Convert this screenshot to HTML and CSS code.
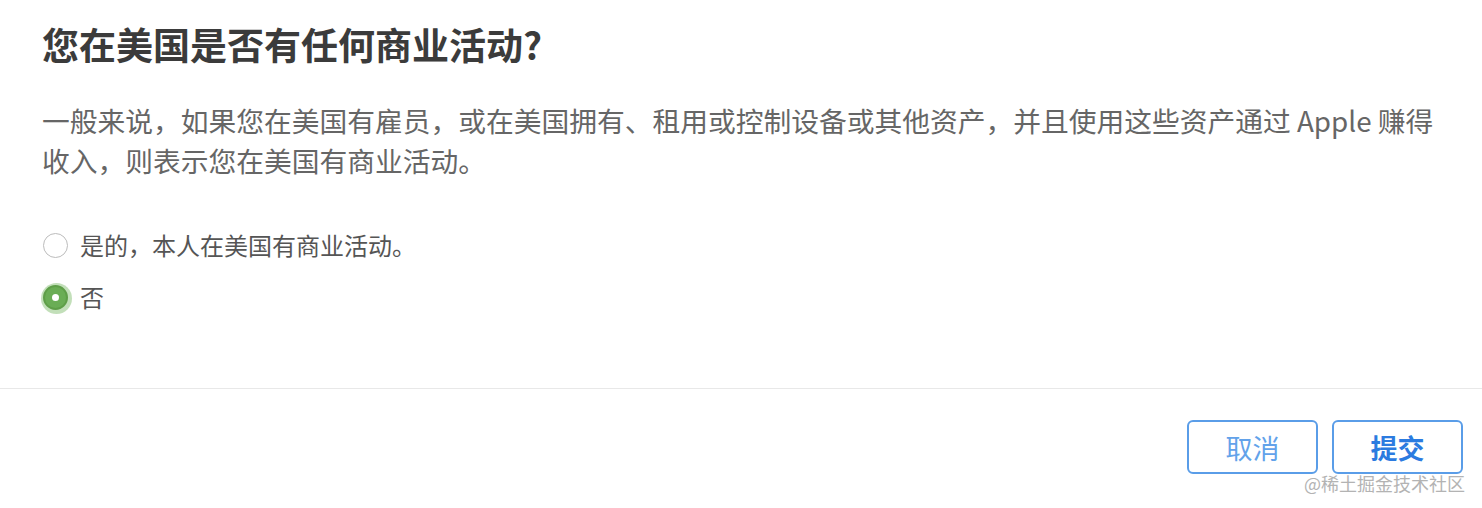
FILE: index.html
```html
<!DOCTYPE html>
<html lang="zh-CN">
<head>
<meta charset="utf-8">
<link rel="stylesheet" href="styles.css">
</head>
<body>
<div class="dialog">
  <div class="content">
    <h1 class="title">您在美国是否有任何商业活动?</h1>
    <p class="desc">一般来说，如果您在美国有雇员，或在美国拥有、租用或控制设备或其他资产，并且使用这些资产通过 Apple 赚得收入，则表示您在美国有商业活动。</p>
    <div class="options">
      <label class="option"><span class="radio"></span><span class="label-text">是的，本人在美国有商业活动。</span></label>
      <label class="option"><span class="radio checked"></span><span class="label-text">否</span></label>
    </div>
  </div>
  <div class="footer">
    <button class="btn btn-cancel">取消</button>
    <button class="btn btn-submit">提交</button>
  </div>
  <div class="watermark">@稀土掘金技术社区</div>
</div>
</body>
</html>
```

FILE: styles.css
```css
html, body {
  margin: 0;
  padding: 0;
  background: #ffffff;
}

body {
  font-family: "Noto Sans CJK SC", "Noto Sans", sans-serif;
  width: 1482px;
  height: 508px;
  overflow: hidden;
}

.dialog {
  position: relative;
  height: 508px;
}

.content {
  padding: 22px 30px 0 42px;
}

.title {
  margin: 0;
  font-size: 37px;
  line-height: 44px;
  font-weight: 700;
  color: #3b3b3b;
}

.desc {
  margin: 34px 0 0;
  font-size: 27.75px;
  line-height: 40px;
  color: #666666;
}

.options {
  margin-top: 49px;
  display: flex;
  flex-direction: column;
  gap: 20px;
}

.option {
  display: flex;
  align-items: center;
  gap: 12px;
  height: 32px;
  padding-left: 1px;
}

.radio {
  box-sizing: border-box;
  width: 25px;
  height: 25px;
  border-radius: 50%;
  border: 1.5px solid #bcbcbc;
  background: #fff;
  display: flex;
  align-items: center;
  justify-content: center;
  flex: none;
}

.radio.checked {
  border: 2px solid #5e9e48;
  background: #6aad55;
  box-shadow: 1px 1px 0 3px rgba(120, 185, 100, 0.45);
}

.radio.checked::after {
  content: "";
  width: 7px;
  height: 7px;
  border-radius: 50%;
  background: #ffffff;
}

.label-text {
  font-size: 24px;
  line-height: 32px;
  color: #555555;
}

.footer {
  margin-top: 75px;
  border-top: 1px solid #e8e8e8;
  padding: 31px 19px 0 0;
  display: flex;
  justify-content: flex-end;
  gap: 14px;
}

.btn {
  box-sizing: border-box;
  width: 131px;
  height: 54px;
  border: 2px solid #5a9de8;
  border-radius: 6px;
  background: #ffffff;
  font-family: "Noto Sans CJK SC", "Noto Sans", sans-serif;
  font-size: 27px;
  line-height: 1;
  padding: 0;
}

.btn-cancel {
  color: #62a2ea;
  font-weight: 400;
}

.btn-submit {
  color: #2c7be0;
  font-weight: 700;
}

.watermark {
  position: absolute;
  right: 17px;
  bottom: 14px;
  font-size: 18px;
  line-height: 22px;
  color: #b3b3b3;
  text-shadow: 0 0 2px #ffffff;
}
```
